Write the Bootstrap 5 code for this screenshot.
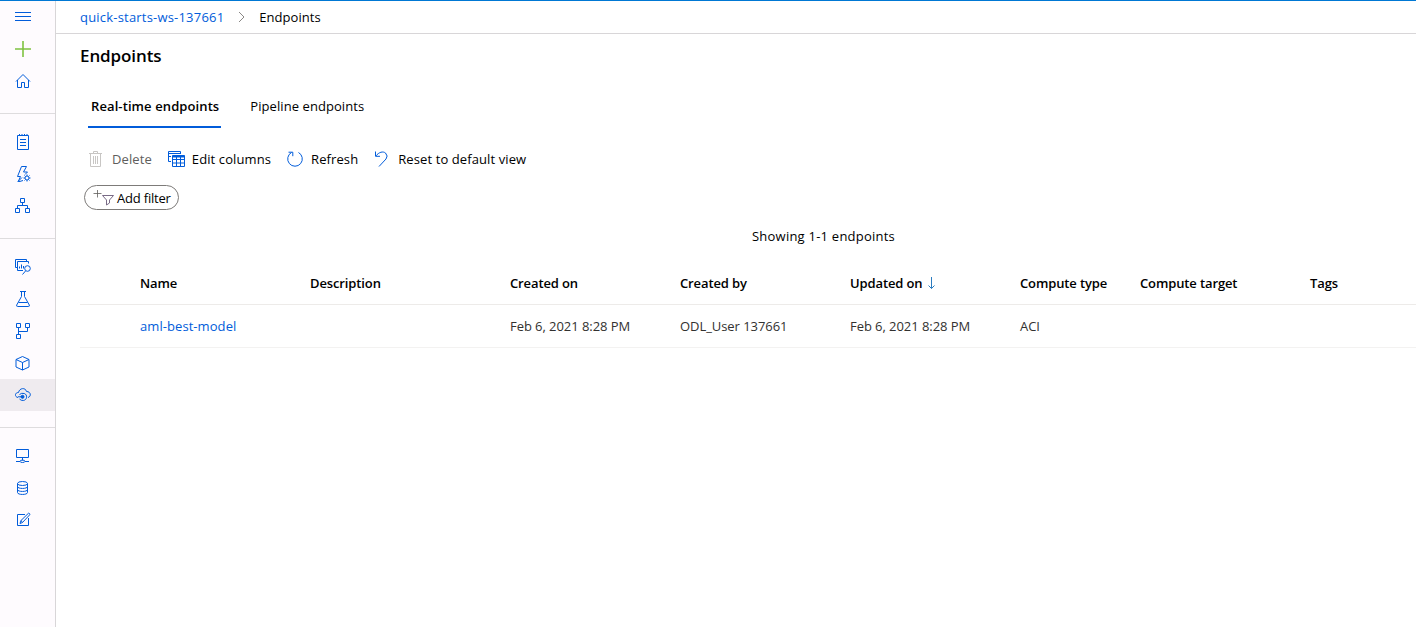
<!DOCTYPE html>
<html lang="en">
<head>
<meta charset="utf-8">
<meta name="viewport" content="width=device-width, initial-scale=1">
<title>Endpoints</title>
<link href="https://cdn.jsdelivr.net/npm/bootstrap@5.3.0/dist/css/bootstrap.min.css" rel="stylesheet">
<style>
  :root { --azure: #015cda; }
  body { font-family: "Open Sans", "Noto Sans", sans-serif; font-size: 13px; line-height: 20px; color: #000; border-top: 1px solid #0078d4; letter-spacing: -.02px; }
  a { color: var(--azure); text-decoration: none; }
  svg { display: block; fill: none; stroke: currentColor; flex: none; }
  .rail { width: 56px; background: #fefbfe; border-right: 1px solid #d8d6d8; color: var(--azure); }
  .rail a { height: 32px; padding-left: 15px; display: flex; align-items: center; }
  .rail a.active { background: #efebef; }
  .rail hr { margin: 16px 0 12px; border-top: 1px solid #dedcde; opacity: 1; }
  .crumbs { height: 33px; border-bottom: 1px solid #d8d6d8; padding-left: 24px; }
  .crumbs a { letter-spacing: .2px; }
  .crumbs span { letter-spacing: .05px; }
  h1 { font-size: 17px; line-height: 24px; font-weight: 600; margin: 10px 0 0 24px; letter-spacing: -.1px; }
  .tabs { margin: 17px 0 0 32px; height: 43px; gap: 26px; }
  .tabs a { color: #000; line-height: 42px; height: 43px; padding: 0 3px; border-bottom: 2px solid transparent; letter-spacing: .07px; }
  .tabs a.active { font-weight: 600; border-color: var(--azure); padding: 0 2px 0 3px; letter-spacing: .1px; }
  .tools { height: 20px; margin: 21px 0 0 32px; letter-spacing: .1px; }
  .tools svg { color: var(--azure); margin-right: 8px; }
  .filter { width: 95px; height: 25px; margin: 16px 0 0 28px; border: 1px solid #7d7b79; border-radius: 13px; padding-left: 8px; letter-spacing: -.2px; }
  .count { margin-top: 16px; text-align: center; padding-left: 175px; letter-spacing: .23px; }
  .grid { margin: 15px 0 0 24px; table-layout: fixed; width: 1336px; border-collapse: collapse; }
  .grid th { font-weight: 600; height: 43px; border-bottom: 1px solid #edebe9; padding: 2px 0 0; letter-spacing: -.12px; }
  .grid td { height: 43px; color: #323130; border-bottom: 1px solid #f3f2f1; padding: 0; letter-spacing: -.06px; }
  .grid td a { letter-spacing: .07px; }
</style>
</head>
<body class="d-flex vh-100 overflow-hidden">
<nav class="rail flex-shrink-0">
  <a href="#"><svg width="16" height="16"><path d="M0 3.500h16M0 7.500h16M0 11.500h16"/></svg></a>
  <a href="#"><svg width="16" height="16" stroke-width="1.600" style="color:#7fc241"><path d="M8 0v16M0 8h16"/></svg></a>
  <a href="#"><svg width="16" height="16"><path d="M1 8.500 8 1.500l7 7M2.500 7v7.500h4v-5h3v5h4V7"/></svg></a>
  <hr>
  <a href="#"><svg width="16" height="16"><path d="M2.500 1.500h11v14h-11zM5 5.500h6M5 8.500h6M5 11.500h6M4.500 0v2M7 0v2M9.500 0v2M12 0v2"/></svg></a>
  <a href="#"><svg width="16" height="16"><path d="M8 14.500 3 16l2.500-5.500H2.500L6.500.5h5L8.500 6h4L10 8.500M3 15.500l4-4"/><circle cx="12" cy="12" r="2"/><path d="M12 8.500v1.500M12 14v1.500M8.500 12H10M14 12h1.500M9.500 9.500l1 1M13.500 13.500l1 1M9.500 14.500l1-1M13.500 10.500l1-1"/></svg></a>
  <a href="#"><svg width="16" height="16"><path d="M5.500.5h4v4h-4zM.5 10.500h4v4h-4zM10.500 10.500h4v4h-4zM7.500 4.500v3M2.500 10.500v-3h10v3"/></svg></a>
  <hr>
  <a href="#"><svg width="16" height="16"><path d="M2 8.500H.5v-8h11v2M8 11.500H2.500v-9h11v2M4.500 9.500v-2M6.500 9.500v-4M8.500 9.500V7"/><circle cx="12.500" cy="9.500" r="2.800"/><path d="M10.500 12 7.500 15.500"/></svg></a>
  <a href="#"><svg width="16" height="16"><path d="M5 .5h6M6.500.5v5L1.700 14q-.5 1.500 1 1.500h10.600q1.500 0 1-1.500L9.500 5.500v-5M3.500 11.500h9"/></svg></a>
  <a href="#"><svg width="16" height="16"><path d="M1.500.5h4v4h-4zM10.500.5h4v4h-4zM1.500 11.500h4v4h-4zM3.500 4.500v7M3.500 8.500h9v-4"/></svg></a>
  <a href="#"><svg width="16" height="16"><path d="M7.500 1.500 14 4.500v7.500L7.500 15 1 12V4.500zM1 4.500l6.500 3 6.500-3M7.500 7.500V15"/></svg></a>
  <a href="#" class="active"><svg width="16" height="16"><path d="M3 10.500C-.8 9.800-.3 5.500 3.500 5.500 4.500.7 10.500.3 11.500 4.500c4.500 0 5 5 1.500 6"/><path d="M4.500 7.500q2-1.800 4.800-1c3.500 1.200 3 6.500-1 7Q6 13.700 4.500 12M3 9.800h4"/><circle cx="7.500" cy="9.800" r="1.500" fill="currentColor"/></svg></a>
  <hr>
  <a href="#"><svg width="16" height="16"><path d="M1.500 1.500h12v8h-12zM7.500 9.500v3M1 13.500h4M10 13.500h4"/><ellipse cx="7.500" cy="13.300" rx="2.500" ry="1.200"/></svg></a>
  <a href="#"><svg width="16" height="16"><ellipse cx="7.500" cy="3.500" rx="5" ry="2"/><path d="M2.500 3.500v9c0 2.600 10 2.600 10 0v-9M2.500 6.500c0 2.600 10 2.600 10 0M2.500 9.500c0 2.600 10 2.600 10 0"/></svg></a>
  <a href="#"><svg width="16" height="16"><path d="M10 2.500H2.500v11h11V6M5 11.500l1-3 7.500-7.300q1.500 0 1.300 1.500L7.500 10.500zM6 8.500l1.500 2"/></svg></a>
</nav>
<main class="flex-grow-1">
  <div class="crumbs d-flex align-items-center">
    <a href="#">quick-starts-ws-137661</a>
    <svg width="8" height="12" style="color:#8a8886;margin:0 13px 0 14px"><path d="M1 1l5 5-5 5"/></svg>
    <span>Endpoints</span>
  </div>
  <h1>Endpoints</h1>
  <div class="tabs d-flex">
    <a href="#" class="active">Real-time endpoints</a>
    <a href="#">Pipeline endpoints</a>
  </div>
  <div class="tools d-flex align-items-center">
    <svg width="16" height="16" style="color:#c8c6c4"><path d="M1 2.500h13M5.500 2.500v-2h4v2M2.500 2.500v13h10v-13M5.500 5v8M7.500 5v8M9.500 5v8"/></svg>
    <span style="color:#605e5c">Delete</span>
    <svg class="ms-3" width="17" height="16" style="margin-right:7px"><path d="M3 10.500H.5V.5h12V3M.5 2.500h12M3 5.500H.5M4.500 4.500h12v11h-12zM4.500 8.500h12M4.500 12h12M8.500 5v10.500M12.500 5v10.500"/><path d="M4.500 5.500h12" stroke-width="2"/></svg>
    <span>Edit columns</span>
    <svg class="ms-3" width="16" height="16"><path d="M4.500 1.500a7.300 7.300 0 1 0 7 0M1.500 1.200h4.300v4"/></svg>
    <span>Refresh</span>
    <svg class="ms-3" width="16" height="16"><path d="M1.500.5v4.800H6M1.800 5C5 1 9 0 11.500 2q3 3 .5 6L5 15.500"/></svg>
    <span>Reset to default view</span>
  </div>
  <div class="filter d-flex align-items-center">
    <svg width="21" height="16" style="color:#605e5c;margin-right:3px"><path d="M.5 3.500h8M4.500-.5v8" stroke-width=".8"/><path d="M9.500 5.500h11l-4 4.500v3l-3 2v-5z" stroke="#796b86"/></svg>
    <span>Add filter</span>
  </div>
  <div class="count">Showing 1-1 endpoints</div>
  <table class="grid">
    <colgroup><col style="width:60px"><col style="width:170px"><col style="width:200px"><col style="width:170px"><col style="width:170px"><col style="width:170px"><col style="width:120px"><col style="width:170px"><col></colgroup>
    <thead><tr><th></th><th>Name</th><th>Description</th><th>Created on</th><th>Created by</th><th><span class="d-flex align-items-center">Updated on <svg width="9" height="14" style="color:#2b7cc0;margin-left:5px"><path d="M4.500 1v11.500M1.500 9.500l3 3 3-3"/></svg></span></th><th>Compute type</th><th>Compute target</th><th>Tags</th></tr></thead>
    <tbody><tr><td></td><td><a href="#">aml-best-model</a></td><td></td><td>Feb 6, 2021 8:28 PM</td><td>ODL_User 137661</td><td>Feb 6, 2021 8:28 PM</td><td>ACI</td><td></td><td></td></tr></tbody>
  </table>
</main>
<script src="https://cdn.jsdelivr.net/npm/bootstrap@5.3.0/dist/js/bootstrap.bundle.min.js"></script>
</body>
</html>
